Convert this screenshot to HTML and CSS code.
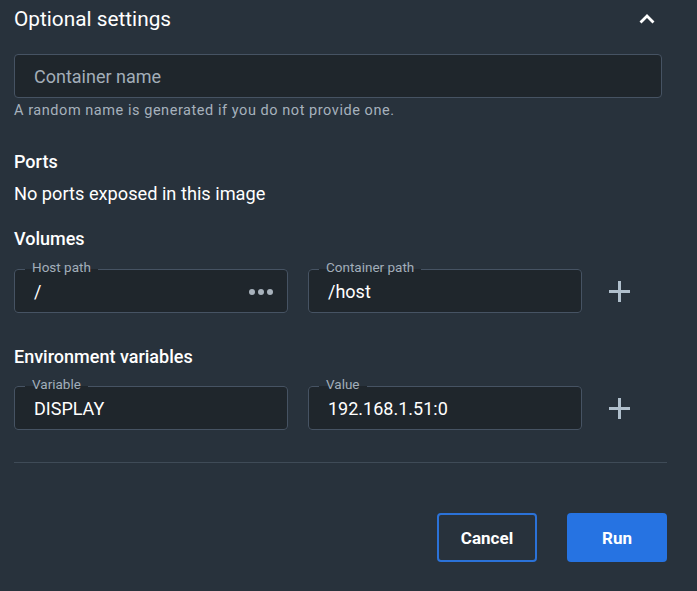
FILE: index.html
```html
<!DOCTYPE html>
<html>
<head>
<meta charset="utf-8">
<link rel="stylesheet" href="styles.css">
</head>
<body>
<div class="panel">
  <div class="header">
    <h2 class="title">Optional settings</h2>
    <button class="chevron" aria-label="Collapse">
      <svg width="24" height="24" viewBox="0 0 24 24"><path d="M6.5 14.5 L12 9 L17.5 14.5" fill="none" stroke="#ffffff" stroke-width="2.8" stroke-linecap="square"/></svg>
    </button>
  </div>

  <div class="name-input"><span class="placeholder">Container name</span></div>
  <p class="helper">A random name is generated if you do not provide one.</p>

  <h3 class="section">Ports</h3>
  <p class="body-text">No ports exposed in this image</p>

  <h3 class="section section-vol">Volumes</h3>
  <div class="row row-vol">
    <fieldset class="field">
      <legend><span>Host path</span></legend>
      <div class="value">/<span class="dots"><i></i><i></i><i></i></span></div>
    </fieldset>
    <fieldset class="field">
      <legend><span>Container path</span></legend>
      <div class="value">/host</div>
    </fieldset>
    <button class="plus" aria-label="Add volume">
      <svg width="21" height="21" viewBox="0 0 21 21"><path d="M10.5 0 V21 M0 10.5 H21" stroke="#b0bfcc" stroke-width="3"/></svg>
    </button>
  </div>

  <h3 class="section section-env">Environment variables</h3>
  <div class="row row-env">
    <fieldset class="field">
      <legend><span>Variable</span></legend>
      <div class="value">DISPLAY</div>
    </fieldset>
    <fieldset class="field">
      <legend><span>Value</span></legend>
      <div class="value">192.168.1.51:0</div>
    </fieldset>
    <button class="plus" aria-label="Add variable">
      <svg width="21" height="21" viewBox="0 0 21 21"><path d="M10.5 0 V21 M0 10.5 H21" stroke="#b0bfcc" stroke-width="3"/></svg>
    </button>
  </div>

  <hr class="divider">

  <div class="actions">
    <button class="btn btn-outline">Cancel</button>
    <button class="btn btn-primary">Run</button>
  </div>
</div>
</body>
</html>
```

FILE: styles.css
```css
* { box-sizing: border-box; }
html, body {
  margin: 0;
  background: #28323c;
  height: 100%;
}
body {
  font-family: Roboto, "Liberation Sans", sans-serif;
  color: #ffffff;
}
.panel {
  padding: 0 30px 0 14px;
}
.header {
  height: 38px;
  display: flex;
  align-items: center;
  justify-content: space-between;
}
.title {
  margin: 0;
  font-size: 20.8px;
  font-weight: 400;
  line-height: 38px;
}
.chevron {
  width: 24px;
  height: 24px;
  padding: 0;
  margin-right: 8px;
  border: 0;
  background: transparent;
  display: flex;
  align-items: center;
  justify-content: center;
}
.name-input {
  margin-top: 16px;
  margin-right: 5px;
  height: 44px;
  border: 1px solid #465363;
  border-radius: 4px;
  background: #1f262c;
  display: flex;
  align-items: center;
  padding-left: 19px;
}
.placeholder {
  font-size: 18px;
  color: #a3aeb9;
}
.helper {
  margin: 4px 0 0;
  font-size: 14.5px;
  line-height: 18px;
  letter-spacing: 0.55px;
  color: #a6b1bc;
}
.section {
  margin: 30px 0 0;
  font-size: 18px;
  font-weight: 500;
  line-height: 24px;
}
.body-text {
  margin: 8px 0 0;
  font-size: 18.2px;
  line-height: 24px;
}
.section-vol { margin-top: 21px; }
.section-env { margin-top: 32px; }
.row {
  display: grid;
  grid-template-columns: 274px 274px 40px;
  column-gap: 20px;
  align-items: end;
}
.row-vol { margin-top: 11px; }
.row-env { margin-top: 10px; }
.field {
  margin: 0;
  padding: 0 14px 0 19px;
  min-width: 0;
  border: 1px solid #465363;
  border-radius: 4px;
  background: #1f262c;
}
.field legend {
  margin-left: -9px;
  padding: 0 7px;
  font-size: 13.5px;
  line-height: 14px;
  color: #a2aeba;
}
.field legend span {
  display: inline-block;
  transform: translateY(-2px);
}
.value {
  height: 36px;
  padding-bottom: 5px;
  display: flex;
  align-items: center;
  justify-content: space-between;
  font-size: 18px;
  color: #ffffff;
}
.dots {
  display: flex;
  gap: 3px;
}
.dots i {
  width: 6px;
  height: 6px;
  border-radius: 50%;
  background: #a8b2bc;
}
.plus {
  width: 40px;
  height: 44px;
  padding: 0 0 0 7px;
  border: 0;
  background: transparent;
  display: flex;
  align-items: center;
  justify-content: flex-start;
}
.divider {
  margin: 32px 0 0;
  border: 0;
  height: 1px;
  background: #3f4b57;
}
.actions {
  margin-top: 50px;
  display: flex;
  justify-content: flex-end;
  gap: 30px;
}
.btn {
  width: 100px;
  height: 49px;
  border-radius: 4px;
  font-family: Roboto, "Liberation Sans", sans-serif;
  font-size: 17px;
  font-weight: 700;
  color: #ffffff;
}
.btn-outline {
  background: transparent;
  border: 2px solid #2b72d8;
}
.btn-primary {
  background: #2673e2;
  border: 0;
}
```
